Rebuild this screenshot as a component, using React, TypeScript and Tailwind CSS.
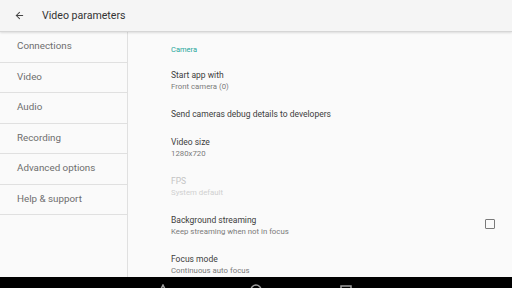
import { ArrowLeft } from 'lucide-react'

const sections = ['Connections', 'Video', 'Audio', 'Recording', 'Advanced options', 'Help & support']

type Pref = { title: string; summary?: string; disabled?: boolean; checkbox?: boolean }

const prefs: Pref[] = [
  { title: 'Start app with', summary: 'Front camera (0)' },
  { title: 'Send cameras debug details to developers' },
  { title: 'Video size', summary: '1280x720' },
  { title: 'FPS', summary: 'System default', disabled: true },
  { title: 'Background streaming', summary: 'Keep streaming when not in focus', checkbox: true },
  { title: 'Focus mode', summary: 'Continuous auto focus' },
]

export default function App() {
  return (
    <div className="w-[512px] h-[288px] flex flex-col overflow-hidden bg-[#fafafa] text-[#212121]" style={{ fontFamily: 'Roboto, "Noto Sans", sans-serif' }}>
      {/* app bar */}
      <div className="h-[32px] shrink-0 flex items-center bg-[#f5f5f5] border-b border-[#d6d6d6] shadow-[0_1px_2px_rgba(0,0,0,0.12)] z-10">
        <ArrowLeft size={11} strokeWidth={2.2} className="ml-[14px] text-[#444]" />
        <span className="ml-[17px] text-[10.6px] text-[#333]">Video parameters</span>
      </div>

      <div className="flex-1 min-h-0 flex">
        {/* sections */}
        <div className="w-[128px] shrink-0 border-r border-[#e0e0e0] bg-[#fafafa]">
          {sections.map(s => (
            <div key={s} className="h-[30.5px] flex items-center pl-[17px] border-b border-[#e0e0e0] text-[9.8px] text-[#6e6e6e]">
              {s}
            </div>
          ))}
        </div>

        {/* preferences */}
        <div className="flex-1 min-w-0 pl-[43px] pr-[17px] pt-[13px]">
          <div className="h-[10px] leading-[10px] text-[7.5px] text-[#26a69a] mb-[6px]">Camera</div>
          {prefs.map(p => (
            <div key={p.title} className={`flex items-center ${p.summary ? 'h-[39px]' : 'h-[28px]'}`}>
              <div className="flex-1 min-w-0">
                <div className={`text-[8.5px] leading-[11px] ${p.disabled ? 'text-[#c4c4c4]' : 'text-[#3d3d3d]'}`}>{p.title}</div>
                {p.summary && (
                  <div className={`text-[7.8px] leading-[11px] ${p.disabled ? 'text-[#d0d0d0]' : 'text-[#7a7a7a]'}`}>{p.summary}</div>
                )}
              </div>
              {p.checkbox && <div className="w-[10px] h-[10px] border-[1.5px] border-[#7a7a7a] rounded-[1px] mt-[-3px]" />}
            </div>
          ))}
        </div>
      </div>

      {/* nav bar */}
      <div className="h-[11px] shrink-0 bg-black relative overflow-hidden">
        <svg className="absolute left-[157px] top-[7px]" width="12" height="12" viewBox="0 0 12 12">
          <path d="M6 1 L11 11 L1 11 Z" fill="none" stroke="#9e9e9e" strokeWidth="1.5" />
        </svg>
        <svg className="absolute left-[250px] top-[7px]" width="12" height="12" viewBox="0 0 12 12">
          <circle cx="6" cy="6" r="5" fill="none" stroke="#9e9e9e" strokeWidth="1.5" />
        </svg>
        <svg className="absolute left-[340px] top-[8px]" width="12" height="12" viewBox="0 0 12 12">
          <rect x="1" y="1" width="10" height="10" fill="none" stroke="#9e9e9e" strokeWidth="1.5" />
        </svg>
      </div>
    </div>
  )
}
